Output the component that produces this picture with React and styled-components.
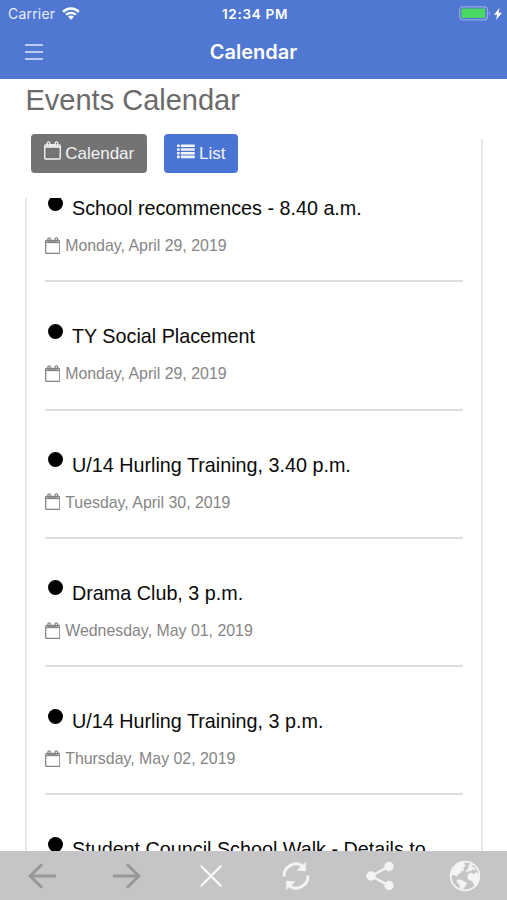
import React from "react";
import styled, { createGlobalStyle } from "styled-components";

const events = [
  { title: "School recommences - 8.40 a.m.", date: "Monday, April 29, 2019" },
  { title: "TY Social Placement", date: "Monday, April 29, 2019" },
  { title: "U/14 Hurling Training, 3.40 p.m.", date: "Tuesday, April 30, 2019" },
  { title: "Drama Club, 3 p.m.", date: "Wednesday, May 01, 2019" },
  { title: "U/14 Hurling Training, 3 p.m.", date: "Thursday, May 02, 2019" },
  { title: "Student Council School Walk - Details to" },
];

const WifiIcon = () => (
  <svg width="18" height="13" viewBox="0 0 18 13" fill="none">
    <path d="M1.1 4.8a11.2 11.2 0 0 1 15.8 0" stroke="#fff" strokeWidth="2.6" />
    <path d="M4.1 7.8a7 7 0 0 1 9.8 0" stroke="#fff" strokeWidth="2.3" />
    <path d="M9 12.8 6.1 9.8a4 4 0 0 1 5.8 0z" fill="#fff" />
  </svg>
);

const BatteryIcon = () => (
  <svg width="32" height="15" viewBox="0 0 32 15">
    <rect x="0.6" y="0.8" width="27.8" height="13" rx="3" fill="none" stroke="#93a9e0" strokeWidth="1.2" />
    <rect x="2.3" y="2.5" width="24" height="9.6" rx="1.2" fill="#4bd863" />
    <path d="M29.8 5.2c1.8.7 1.8 3.5 0 4.2z" fill="#93a9e0" />
  </svg>
);

const BoltIcon = () => (
  <svg width="8" height="12" viewBox="0 0 8 12">
    <path d="M5.4 0 0 6.7h3.1L2.1 12 8 4.8H4.7z" fill="#fff" />
  </svg>
);

const CalendarIcon = ({ size = 16 }) => (
  <svg width={size} height={(size * 18) / 16} viewBox="0 0 16 18" fill="none" stroke="currentColor">
    <rect x="0.7" y="3.6" width="14.6" height="13.4" rx="0.9" strokeWidth="1.3" />
    <path d="M.8 5.6h14.4" strokeWidth="1.5" />
    <rect x="3" y="0.9" width="2.5" height="4.4" rx="1.2" strokeWidth="1.2" />
    <rect x="10.5" y="0.9" width="2.5" height="4.4" rx="1.2" strokeWidth="1.2" />
    <path d="M5.6 4.1h4.8" strokeWidth="1.8" />
  </svg>
);

const ListIcon = () => (
  <svg width="18" height="15" viewBox="0 0 18 15" fill="currentColor">
    {[0.5, 4.2, 7.9, 11.6].map((y) => (
      <g key={y}>
        <rect x="0" y={y} width="2.7" height="2.6" rx="0.4" />
        <rect x="3.8" y={y} width="14" height="2.6" rx="0.4" />
      </g>
    ))}
  </svg>
);

const BackIcon = () => (
  <svg width="28" height="26" viewBox="0 0 28 26" fill="none" stroke="#98989a" strokeWidth="3">
    <path d="M14 1.2 2.2 13 14 24.8M2.2 13H28" />
  </svg>
);

const ForwardIcon = () => (
  <svg width="28" height="26" viewBox="0 0 28 26" fill="none" stroke="#98989a" strokeWidth="3">
    <path d="M14 1.2 25.8 13 14 24.8M25.8 13H0" />
  </svg>
);

const CloseIcon = () => (
  <svg width="22" height="22" viewBox="0 0 22 22" fill="none" stroke="#fafafa" strokeWidth="2.2">
    <path d="m.8.8 20.4 20.4M21.2.8.8 21.2" />
  </svg>
);

const RefreshIcon = () => (
  <svg width="28" height="30" viewBox="0 0 28 30" fill="#f4f4f4">
    <path d="M2 15.5A12 12 0 0 1 20 4.6" fill="none" stroke="#f4f4f4" strokeWidth="3" />
    <path d="M23.8.8v9.4l-9.3-.8z" />
    <path d="M26 14.5A12 12 0 0 1 8 25.4" fill="none" stroke="#f4f4f4" strokeWidth="3" />
    <path d="M4.2 29.2v-9.4l9.3.8z" />
  </svg>
);

const ShareIcon = () => (
  <svg width="28" height="30" viewBox="0 0 28 30" fill="#f4f4f4">
    <path d="M23 5.5 5 15l18 9.5" fill="none" stroke="#f4f4f4" strokeWidth="2.4" />
    <circle cx="23" cy="5.5" r="4.7" />
    <circle cx="5" cy="15" r="4.7" />
    <circle cx="23" cy="24.5" r="4.7" />
  </svg>
);

const GlobeIcon = () => (
  <svg width="32" height="32" viewBox="0 0 32 32" fill="#f4f4f4">
    <circle cx="16" cy="16" r="14.4" fill="none" stroke="#f4f4f4" strokeWidth="1.7" />
    <path d="M3.4 10.5 6 6l4.5-3.6L16 1.3l-.8 3 1.8 1.2-2.6 2.3.9 2.8-2.6.4-2.4 3.2-2.3.3.6 2.4-3.4-1.8-3.5.5z" />
    <path d="m8 19.4 4.4.3 5.6 3.2-2 3.6-2.6 3.6-2.4-1-.6-4.5-2.8-2.6z" />
    <path d="m19.5 5.5 2.2-1.8 2.5 1.1-2 1.7 2.3.5 2.6 3-3.6-.6-1.6 1.5-2.6.2-1.6 1.6-1-2 2.2-1.7z" />
    <path d="m19.5 13.8 3.2-1 1.7 1.4 3.1-2.2 2.2 3.2.2 3.5-2 5-2.5 2.3-2-4.8-3.6-1.3-1.7-2.6z" />
  </svg>
);

const App = () => {
  return (
    <>
      <GlobalStyle />
      <Screen>
        <StatusBar>
          <Carrier>
            Carrier <WifiIcon />
          </Carrier>
          <Time>12:34 PM</Time>
          <Power>
            <BatteryIcon />
            <BoltIcon />
          </Power>
        </StatusBar>
        <NavBar>
          <MenuButton aria-label="Menu">
            <span></span>
            <span></span>
            <span></span>
          </MenuButton>
          <NavTitle>Calendar</NavTitle>
        </NavBar>
        {/* End header */}

        <PageTitle>Events Calendar</PageTitle>
        <Content>
          <Tabs>
            <TabButton $width="116px">
              <CalendarIcon size={17} />
              Calendar
            </TabButton>
            <TabButton $width="74px" $active>
              <ListIcon />
              List
            </TabButton>
          </Tabs>
          <EventList>
            {events.map((event, i) => (
              <EventItem key={i}>
                <EventTitle>
                  <Dot />
                  <span>{event.title}</span>
                </EventTitle>
                {event.date && (
                  <EventDate>
                    <CalendarIcon size={15.5} />
                    {event.date}
                  </EventDate>
                )}
              </EventItem>
            ))}
          </EventList>
        </Content>
        {/* End content */}

        <Toolbar>
          <ToolButton><BackIcon /></ToolButton>
          <ToolButton><ForwardIcon /></ToolButton>
          <ToolButton><CloseIcon /></ToolButton>
          <ToolButton><RefreshIcon /></ToolButton>
          <ToolButton><ShareIcon /></ToolButton>
          <ToolButton><GlobeIcon /></ToolButton>
        </Toolbar>
      </Screen>
    </>
  );
};

export default App;

const GlobalStyle = createGlobalStyle`
  * {
    box-sizing: border-box;
  }
  body {
    margin: 0;
    background: #fff;
    font-family: "Liberation Sans", Arial, sans-serif;
  }
  button {
    border: 0;
    padding: 0;
    background: none;
    font-family: inherit;
  }
  svg {
    display: block;
    flex: none;
  }
`;

const Screen = styled.div`
  display: flex;
  flex-direction: column;
  width: 507px;
  height: 900px;
  overflow: hidden;
  background: #fff;
`;

const StatusBar = styled.div`
  display: grid;
  grid-template-columns: 1fr auto 1fr;
  align-items: center;
  flex: none;
  height: 27px;
  padding: 0 5px 0 8px;
  background: #5077d1;
  color: #fff;
  font-family: Inter, sans-serif;
  font-size: 14px;
`;

const Carrier = styled.div`
  display: flex;
  align-items: center;
  gap: 7px;
  letter-spacing: 0.2px;
  color: #e8eefb;

  svg {
    margin-top: -1px;
  }
`;

const Time = styled.div`
  font-size: 13.5px;
  font-weight: 600;
  letter-spacing: 0.7px;
`;

const Power = styled.div`
  display: flex;
  align-items: center;
  justify-content: flex-end;
  gap: 3px;
`;

const NavBar = styled.div`
  display: grid;
  grid-template-columns: 1fr auto 1fr;
  align-items: center;
  flex: none;
  height: 52px;
  padding: 0 25px 2px;
  background: #5077d1;
`;

const MenuButton = styled.button`
  display: flex;
  flex-direction: column;
  gap: 5px;
  width: 18px;

  span {
    height: 2px;
    background: #bccbf0;
  }
`;

const NavTitle = styled.div`
  color: #fff;
  font-family: Inter, sans-serif;
  font-size: 20px;
  font-weight: 600;
`;

const PageTitle = styled.h1`
  flex: none;
  height: 60px;
  margin: 0;
  padding: 4px 0 0 25.5px;
  color: #6a6a6a;
  font-size: 29px;
  font-weight: 400;
  line-height: 34px;
`;

const Content = styled.div`
  display: flex;
  flex-direction: column;
  flex: 1;
  min-height: 0;
  width: 458px;
  margin-left: 25px;
  border-right: 2px solid #e8e8e8;
`;

const Tabs = styled.div`
  display: flex;
  gap: 17px;
  flex: none;
  height: 64px;
  margin-top: -5px;
  padding-left: 6px;
`;

const TabButton = styled.button`
  display: flex;
  align-items: center;
  justify-content: center;
  gap: 4.5px;
  width: ${(props) => props.$width};
  height: 39px;
  border-radius: 4px;
  background: ${(props) => (props.$active ? "#4a74d4" : "#737373")};
  color: #f4f4f4;
  font-size: 17px;

  svg {
    margin-bottom: 5px;
  }
`;

const EventList = styled.div`
  flex: 1;
  min-height: 0;
  overflow: hidden;
  padding: 0 18px;
  border-left: 2px solid #e8e8e8;
`;

const EventItem = styled.div`
  height: 128.3px;
  padding-top: 41px;
  border-bottom: 2px solid #dedede;

  &:first-child {
    height: 87.3px;
    padding-top: 0;
    margin-top: -3px;
  }
`;

const EventTitle = styled.div`
  display: flex;
  height: 26px;
  color: #0a0a0a;
  font-size: 19.75px;
  line-height: 26px;
  white-space: nowrap;
`;

const Dot = styled.i`
  flex: none;
  width: 15px;
  height: 15px;
  margin: 0.6px 9px 0 3px;
  border-radius: 50%;
  background: #000;
`;

const EventDate = styled.div`
  display: flex;
  align-items: center;
  gap: 5.2px;
  height: 20px;
  margin-top: 15px;
  margin-left: -0.5px;
  color: #858585;
  font-size: 15.9px;
  line-height: 20px;

  svg {
    margin-top: -1px;
  }
`;

const Toolbar = styled.div`
  display: grid;
  grid-template-columns: repeat(6, 1fr);
  flex: none;
  height: 49px;
  background: #c5c5c7;
`;

const ToolButton = styled.button`
  display: flex;
  align-items: center;
  justify-content: center;
`;
